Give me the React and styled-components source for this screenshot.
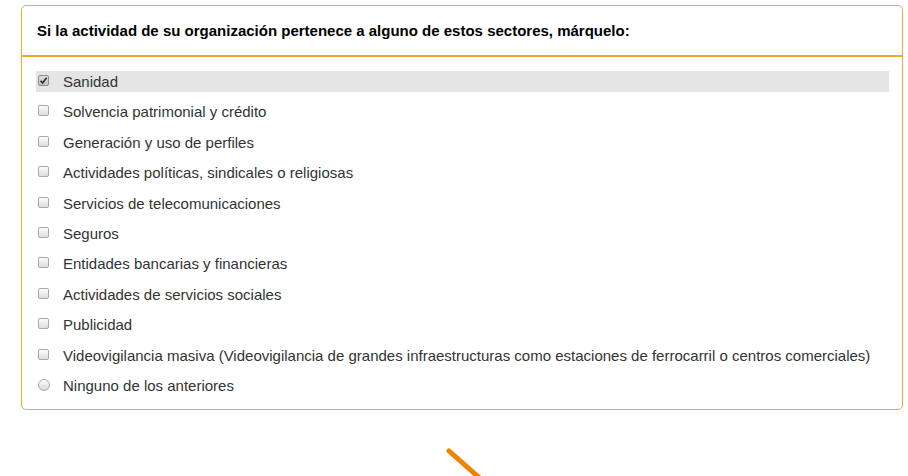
import React from "react";
import styled, { createGlobalStyle } from "styled-components";

const GlobalStyle = createGlobalStyle`
  html, body {
    margin: 0;
    padding: 0;
    overflow: hidden;
    background: #ffffff;
    font-family: "Liberation Sans", Arial, sans-serif;
  }
`;

const sectors = [
  { label: "Sanidad", checked: true },
  { label: "Solvencia patrimonial y crédito" },
  { label: "Generación y uso de perfiles" },
  { label: "Actividades políticas, sindicales o religiosas" },
  { label: "Servicios de telecomunicaciones" },
  { label: "Seguros" },
  { label: "Entidades bancarias y financieras" },
  { label: "Actividades de servicios sociales" },
  { label: "Publicidad" },
  {
    label:
      "Videovigilancia masiva (Videovigilancia de grandes infraestructuras como estaciones de ferrocarril o centros comerciales)",
  },
  { label: "Ninguno de los anteriores", radio: true },
];

const App = () => {
  return (
    <Page>
      <GlobalStyle />
      <Panel>
        <PanelHeader>
          Si la actividad de su organización pertenece a alguno de estos sectores, márquelo:
        </PanelHeader>
        <PanelBody>
          {sectors.map((s) => (
            <OptionRow key={s.label} active={s.checked}>
              {s.radio ? (
                <RadioMark />
              ) : (
                <CheckMark checked={s.checked}>
                  {s.checked && (
                    <svg width="9" height="9" viewBox="0 0 9 9">
                      <path
                        d="M1.5 4.8 L3.6 7 L7.6 1.8"
                        fill="none"
                        stroke="#2b2b2b"
                        strokeWidth="1.6"
                      />
                    </svg>
                  )}
                </CheckMark>
              )}
              <OptionLabel>{s.label}</OptionLabel>
            </OptionRow>
          ))}
        </PanelBody>
      </Panel>
      <ArrowArea>
        <svg width="120" height="34" viewBox="0 0 120 34">
          <line
            x1="47"
            y1="5"
            x2="81"
            y2="35"
            stroke="#ef8200"
            strokeWidth="5"
            strokeLinecap="round"
          />
        </svg>
      </ArrowArea>
    </Page>
  );
};

export default App;

const Page = styled.div`
  padding: 5px 5px 0 21px;
  height: 476px;
  box-sizing: border-box;
`;

const Panel = styled.div`
  border: 1px solid #f2ab2c;
  border-radius: 5px;
  background: #ffffff;
`;

const PanelHeader = styled.div`
  display: flex;
  align-items: center;
  height: 49px;
  padding: 0 15px;
  border-bottom: 2px solid #f2ab2c;
  font-size: 15px;
  font-weight: bold;
  color: #000000;
`;

const PanelBody = styled.div`
  display: flex;
  flex-direction: column;
  gap: 9.4px;
  padding: 14px 13px 13px 14px;
`;

const OptionRow = styled.div`
  display: flex;
  align-items: center;
  height: 21px;
  padding-left: 2px;
  background: ${(props) => (props.active ? "#e5e5e5" : "transparent")};
`;

const CheckMark = styled.span`
  display: flex;
  align-items: center;
  justify-content: center;
  box-sizing: border-box;
  width: 11px;
  height: 11px;
  margin-bottom: 2px;
  border: 1px solid ${(props) => (props.checked ? "#8e8e8e" : "#a9a9a9")};
  border-radius: 2px;
  background: ${(props) =>
    props.checked
      ? "linear-gradient(#dcdcdc, #c4c4c4)"
      : "linear-gradient(#fcfcfc, #dedede)"};
`;

const RadioMark = styled.span`
  box-sizing: border-box;
  width: 12px;
  height: 12px;
  margin: 0 -1px 1px 0;
  border: 1px solid #a9a9a9;
  border-radius: 50%;
  background: linear-gradient(#fcfcfc, #d8d8d8);
`;

const OptionLabel = styled.span`
  margin-left: 14px;
  font-size: 15px;
  color: #333333;
  white-space: nowrap;
`;

const ArrowArea = styled.div`
  display: flex;
  justify-content: center;
  margin-top: 36px;
`;
